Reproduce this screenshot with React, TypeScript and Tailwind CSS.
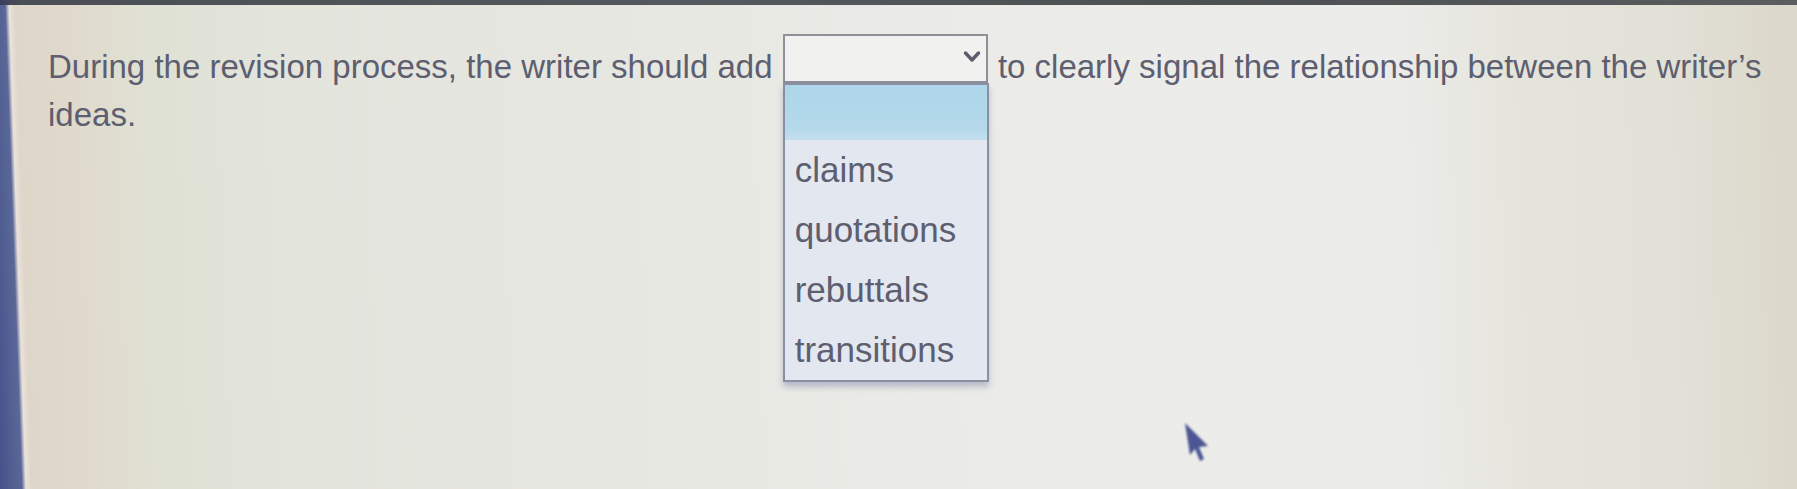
import React from 'react';

const options = ['claims', 'quotations', 'rebuttals', 'transitions'];

// Open native-looking select with its option list dropped below
function BlankSelect() {
  return (
    <span className="relative mx-[1px] inline-block h-[49px] w-[205px] border-2 border-[#8e8f97] bg-[#f1f1f0] align-[-5px]">
      <svg
        className="absolute right-[5px] top-[14px]"
        width="18"
        height="14"
        viewBox="0 0 18 14"
        fill="none"
      >
        <polyline
          points="2.5,3 9,10 15.5,3"
          stroke="#5b5c6c"
          strokeWidth="3.4"
          strokeLinecap="round"
          strokeLinejoin="round"
        />
      </svg>
      <div className="absolute -left-[2px] top-[47px] w-[206px] border-2 border-[#8a90a3] bg-[#e2e7f0] shadow-[0_5px_6px_rgba(90,100,150,0.35)]">
        <div className="h-[55px] bg-[linear-gradient(180deg,#aed5e9_0%,#b4d9eb_80%,#c4dfed_100%)]" />
        {options.map((o) => (
          <div key={o} className="h-[60px] pl-[10px] text-[35px] leading-[60px] text-[#5d5e6f]">
            {o}
          </div>
        ))}
      </div>
    </span>
  );
}

export default function App() {
  return (
    <div className="relative h-[489px] w-full overflow-hidden bg-[linear-gradient(88deg,#44528a_0px,#5a6898_22px,#ece2dc_26px,#ddd6c9_32px,#e0dacd_90px,#dfe1d4_160px,#e3e4dc_300px,#e7e7e1_600px,#ebebe8_1000px,#ececea_1400px,#e6e5dd_1520px,#e2e1d8_1680px,#dcd8cb_1797px)] font-['Liberation_Sans',Arial,sans-serif]">
      {/* monitor bezel edge */}
      <div className="h-[5px] bg-[linear-gradient(90deg,#3a4060_0px,#4b4e54_20px,#55585c_700px,#4d5053_1200px,#5a5c5e_1797px)]" />

      <p className="pl-[48px] pr-[20px] pt-[29px] text-[33px] leading-[48px] text-[#5d5e6f]">
        <span>During the revision process, the writer should add</span> <BlankSelect />{' '}
        <span>to clearly signal the relationship between the writer’s</span> <span>ideas.</span>
      </p>

      {/* mouse pointer */}
      <svg
        className="absolute left-[1180px] top-[418px] blur-[0.8px]"
        width="32"
        height="48"
        viewBox="0 0 32 48"
      >
        <polygon points="5,5 10,37 15,31 20,43 24,41 19,29 28,28" fill="#4b5692" />
      </svg>
    </div>
  );
}
